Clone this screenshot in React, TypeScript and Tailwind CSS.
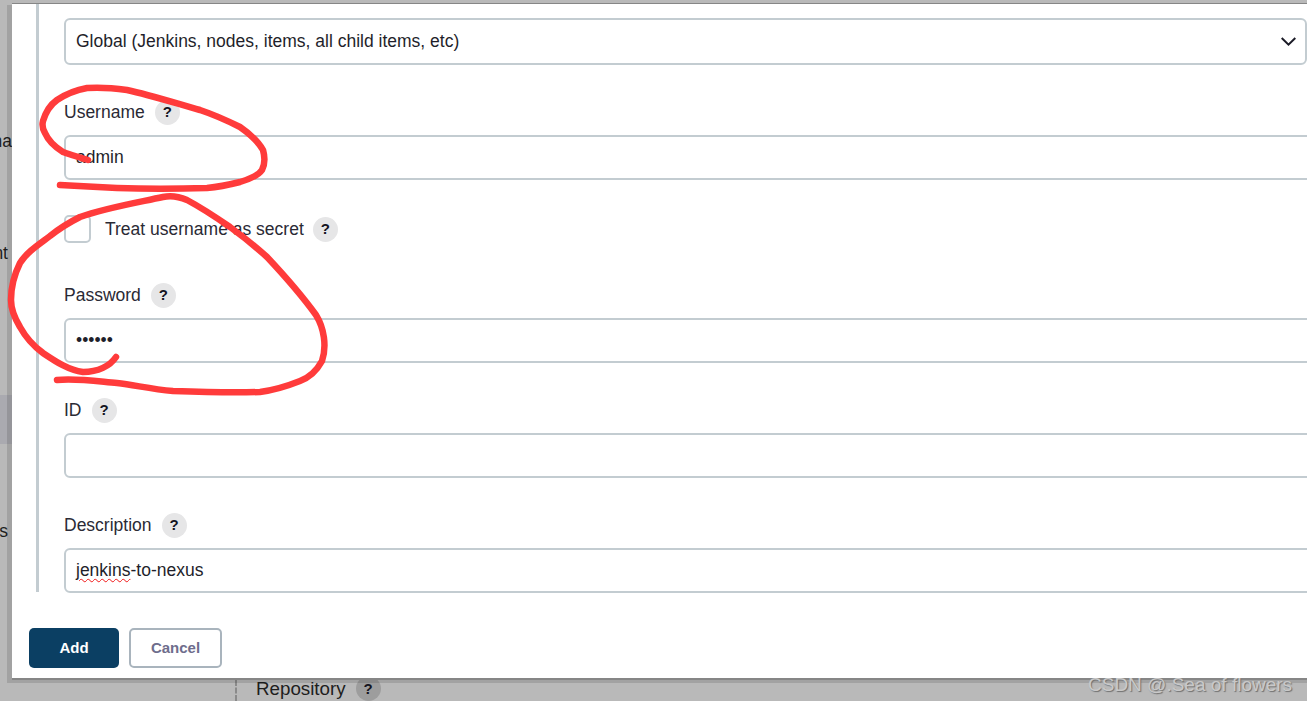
const font = "font-['Liberation_Sans',Arial,sans-serif]";

function HelpBadge({ className = '' }: { className?: string }) {
  return (
    <span className={`flex h-[25px] w-[25px] shrink-0 items-center justify-center rounded-full bg-[#e6e6e7] text-[15px] font-bold text-[#14141f] ${className}`}>
      ?
    </span>
  );
}

function Field({ label, children }: { label: string; children?: React.ReactNode }) {
  return (
    <div>
      <div className="flex h-[25px] items-center gap-[10px] text-[17.5px] text-[#2a2a35]">
        <span>{label}</span>
        <HelpBadge />
      </div>
      <div className="mr-[-5px] mt-[10px] flex h-[45px] items-center rounded-[6px] border-2 border-[#c3ccd1] bg-white pl-[10px] text-[17.5px] text-[#1f1f2b]">
        {children}
      </div>
    </div>
  );
}

function Scribbles() {
  return (
    <svg className="pointer-events-none absolute inset-0 h-[701px] w-[1307px]" viewBox="0 0 1307 701" fill="none">
      <path
        d="M88 160 C78 157 68 154 63 152 C55 147 48 140 45 133 C42 128 42 125 43 121 C46 111 50 105 57 100 C66 94 76 90 87 88 C100 87 113 88 127 90 C150 95 175 103 200 110 C215 115 228 121 240 127 C250 134 258 141 263 150 C265 157 265 164 262 170 C258 176 250 179 240 182 C228 185 218 187 207 188 C175 189 145 189 117 188 C98 187 78 186 60 185"
        stroke="#ff3b3b"
        strokeWidth="6.5"
        strokeLinecap="round"
        strokeLinejoin="round"
      />
      <path
        d="M116 357 C110 366 98 372 83 372 C68 370 55 361 43 353 C32 345 25 336 20 327 C14 317 11 308 11 300 C11 287 14 275 20 263 C27 252 38 245 50 236 C60 228 70 222 80 217 C105 208 135 203 163 197 C172 195 180 197 187 200 C202 208 217 218 230 227 C245 238 256 247 267 257 C282 273 303 297 316 315 C324 328 327 346 322 361 C316 372 308 378 300 381 C285 387 275 390 260 392 C230 393 200 392 173 391 C150 389 135 385 117 383 C95 381 75 378 57 380"
        stroke="#ff3b3b"
        strokeWidth="6.5"
        strokeLinecap="round"
        strokeLinejoin="round"
      />
    </svg>
  );
}

export default function App() {
  return (
    <div className={`${font} relative h-[701px] w-[1307px] overflow-hidden bg-[#b9b9b9] text-[#1e1e1e]`}>
      {/* page dimmed behind the dialog */}
      <div className="flex h-full">
        <aside className="flex w-[12px] flex-col items-end overflow-hidden whitespace-nowrap pt-[131px] text-[17.5px] leading-[20px]">
          <span>na</span>
          <span className="mt-[92px] pr-[4px]">nt</span>
          <div className="mt-[132px] h-[49px] w-full shrink-0 bg-[#aaaab0]" />
          <span className="mt-[77px] pr-[4px]">s</span>
        </aside>
        <main className="flex flex-1 items-end pl-[223px]">
          <div className="h-[21px] border-l-2 border-dashed border-[#8a8a8a]" />
          <div className="ml-[19px] flex items-center gap-[10px] text-[18.75px] leading-[24px]">
            Repository
            <span className="flex h-[25px] w-[25px] items-center justify-center rounded-full bg-[#9d9d9d] text-[15px] font-bold text-[#14141f]">?</span>
          </div>
        </main>
      </div>

      {/* dialog shadow */}
      <div className="absolute bottom-[18px] left-[7px] right-0 top-[5px] bg-black/12" />

      {/* dialog */}
      <div className="absolute bottom-[21px] left-[12px] right-0 top-[3px] overflow-hidden border-b-2 border-t border-[#868686] bg-white">
        <div className="ml-[24px] h-[588px] border-l-[3px] border-[#c3ccd1] pl-[25px] pt-[14px]">
          <div className="mb-[35px] flex h-[47px] items-center justify-between rounded-[6px] border-2 border-[#c3ccd1] pl-[10px] pr-[9px] text-[17.5px] text-[#1f1f2b]">
            Global (Jenkins, nodes, items, all child items, etc)
            <svg width="15" height="9" viewBox="0 0 15 9" fill="none" stroke="#1b1b27" strokeWidth="2">
              <path d="M0.7 1 L7.5 7.6 L14.3 1" />
            </svg>
          </div>
          <div className="flex flex-col gap-[35px]">
            <Field label="Username">admin</Field>
            <div className="mb-[5px] flex h-[28px] items-center text-[17.5px] text-[#2a2a35]">
              <span className="h-[28px] w-[27px] rounded-[5px] border-2 border-[#c3ccd1]" />
              <span className="ml-[14px]">Treat username as secret</span>
              <HelpBadge className="ml-[9px]" />
            </div>
            <Field label="Password">••••••</Field>
            <Field label="ID" />
            <Field label="Description">
              <span className="underline decoration-[#f01818] decoration-wavy decoration-1 underline-offset-2">jenkins</span>-to-nexus
            </Field>
          </div>
        </div>
        <div className="ml-[17px] mt-[36px] flex gap-[10px] text-[15px] font-bold">
          <button className="h-[40px] w-[90px] rounded-[5px] bg-[#0b3f63] text-white">Add</button>
          <button className="h-[40px] w-[93px] rounded-[5px] border-2 border-[#a9b4bd] bg-white text-[#6e6d8c]">Cancel</button>
        </div>
      </div>

      <Scribbles />
      <span className="absolute left-[1088px] top-[673px] text-[19px] leading-[23px] text-[#c9c9c9] [text-shadow:1px_1px_1px_#6f6f6f]">
        CSDN @.Sea of flowers
      </span>
    </div>
  );
}
